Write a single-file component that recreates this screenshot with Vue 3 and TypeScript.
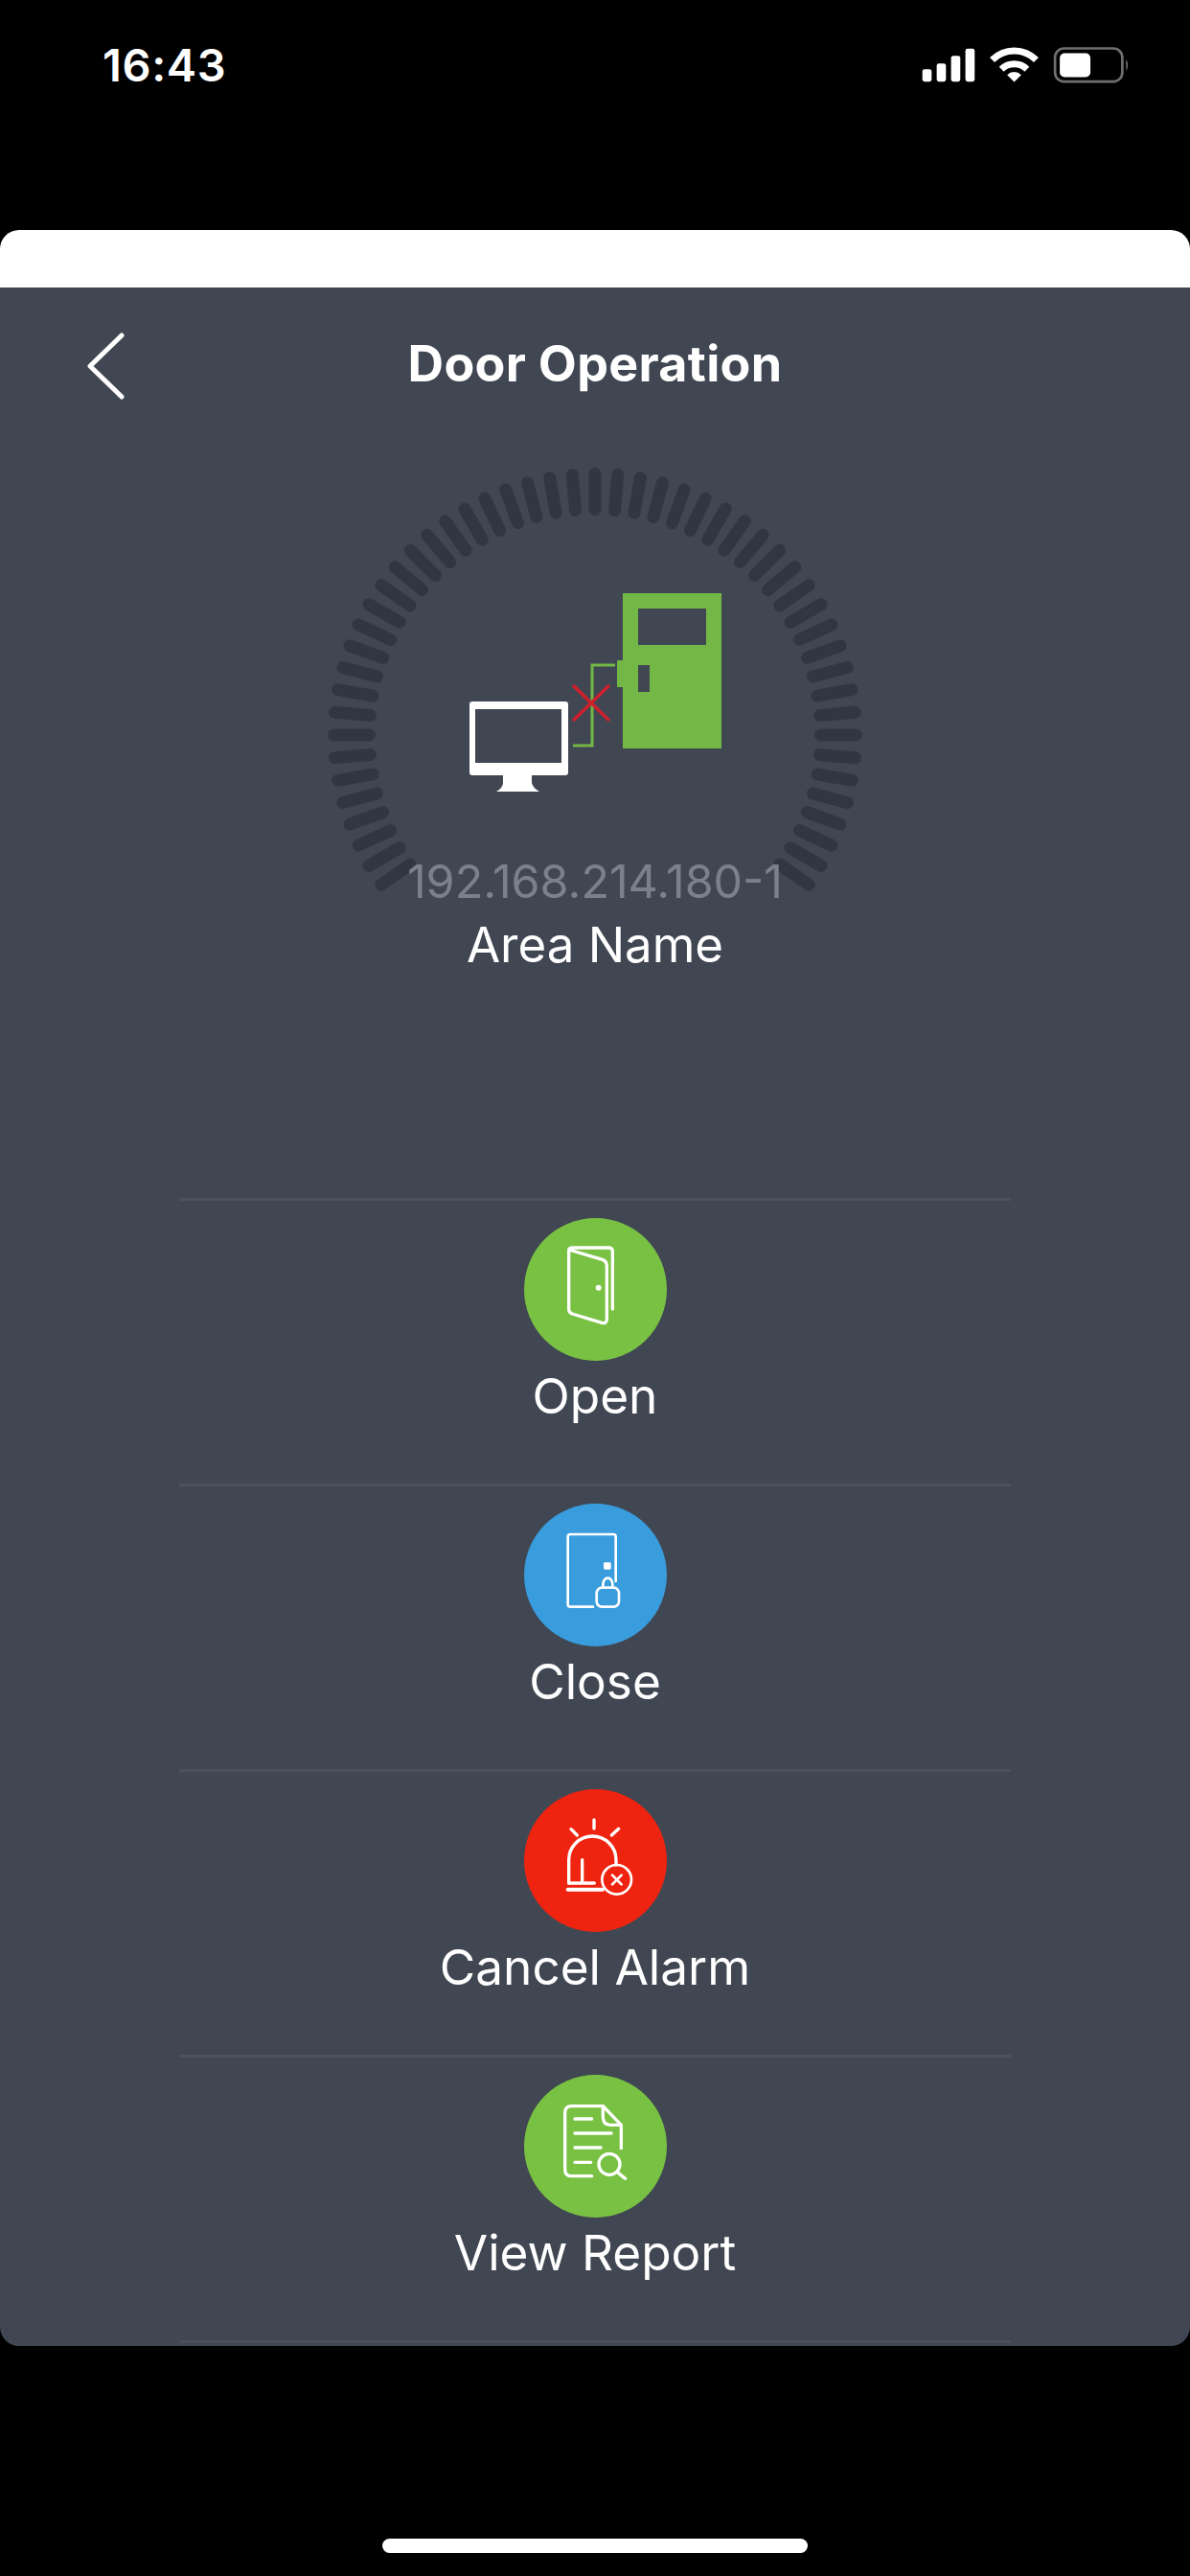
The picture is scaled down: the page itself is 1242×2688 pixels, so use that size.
<template>
  <div class="screen">
    <header class="status-bar">
      <span class="time">16:43</span>
      <svg class="status-icons" viewBox="170 80 670 125" width="223" height="42">
        <rect v-for="bar in signalBars" :key="bar.x" :x="bar.x" :y="bar.y" width="29" :height="194 - bar.y" rx="7" fill="#fff" />
        <path d="M400 126A97 97 0 0 1 538 126" fill="none" stroke="#fff" stroke-width="21" />
        <path d="M429 155A57 57 0 0 1 509 155" fill="none" stroke="#fff" stroke-width="21" />
        <path d="M469 195L447 173A31 31 0 0 1 491 173Z" fill="#fff" />
        <rect x="597" y="90" width="211" height="104" rx="28" fill="none" stroke="#6f6f6f" stroke-width="8" />
        <rect x="612" y="105" width="96" height="75" rx="15" fill="#fff" />
        <path d="M820 124Q831 142 820 161Z" fill="#6f6f6f" />
      </svg>
    </header>

    <div class="sheet">
      <div class="sheet-top"></div>
      <main class="panel">
        <div class="nav">
          <svg class="back" viewBox="0 0 40 70" width="40" height="70">
            <path d="M37 3L4 35L37 67" fill="none" stroke="#fff" stroke-width="5" stroke-linecap="round" stroke-linejoin="round" />
          </svg>
          <h1 class="title">Door Operation</h1>
        </div>

        <section class="device">
          <svg class="gauge" viewBox="341 487 560 560" width="560" height="560">
            <line
              v-for="tick in ticks"
              :key="tick.angle"
              :x1="tick.x1"
              :y1="tick.y1"
              :x2="tick.x2"
              :y2="tick.y2"
              stroke="#303743"
              stroke-width="13"
              stroke-linecap="round"
            />
            <!-- link between the monitor and the door -->
            <path d="M642 694H618V778H598" fill="none" stroke="#73b846" stroke-width="3" />
            <path d="M598 715L636 752M636 715L598 752" fill="none" stroke="#cf1f2d" stroke-width="3.5" />
            <path
              fill-rule="evenodd"
              fill="#73b846"
              d="M650 619H753V781H650ZM666 635V673H737V635ZM666 694V722H678V694Z"
            />
            <rect x="644" y="689" width="7" height="28" rx="1" fill="#73b846" />
            <path
              fill-rule="evenodd"
              fill="#fff"
              d="M493 732H590Q593 732 593 735V806Q593 809 590 809H493Q490 809 490 806V735Q490 732 493 732ZM496 740V796H586V740Z"
            />
            <path d="M525 808H555V817Q556 822 563 826H518Q525 822 525 817Z" fill="#fff" />
          </svg>
          <div class="labels">
            <div class="ip">192.168.214.180-1</div>
            <div class="area">Area Name</div>
          </div>
        </section>

        <nav class="actions">
          <button class="action">
            <span class="circle green">
              <svg viewBox="138 93 447 447" width="149" height="149" fill="none" stroke="#fff" stroke-width="10" stroke-linecap="round" stroke-linejoin="round">
                <path d="M278 192L383 223Q397 228 397 243V408Q397 425 382 421L289 393Q278 389 278 378V196Q278 186 290 186H402Q415 186 415 198V378" />
                <circle cx="371" cy="311" r="9" fill="#fff" stroke="none" />
              </svg>
            </span>
            <span class="label">Open</span>
          </button>

          <button class="action">
            <span class="circle blue">
              <svg viewBox="138 87 447 447" width="149" height="149" fill="none" stroke="#fff" stroke-width="8" stroke-linecap="round" stroke-linejoin="round">
                <path d="M354 410H283Q275 410 275 402V191Q275 183 283 183H417Q425 183 425 191V330" />
                <rect x="365" y="350" width="70" height="60" rx="17" />
                <path d="M385 350V340A15 20 0 0 1 415 340V350" />
                <rect x="387" y="271" width="23" height="22" rx="4" fill="#fff" stroke="none" />
              </svg>
            </span>
            <span class="label">Close</span>
          </button>

          <button class="action">
            <span class="circle red">
              <svg viewBox="138 81 447 447" width="149" height="149" fill="none" stroke="#fff" stroke-width="10" stroke-linecap="round" stroke-linejoin="round">
                <path d="M278 375V302A74 74 0 0 1 426 302V318" />
                <path d="M278 375H358M320 375V302" />
                <path d="M275 395H384" stroke-width="12" />
                <path d="M357 177V204M285 206L304 225M434 205L412 225" />
                <circle cx="428" cy="364" r="46" stroke-width="8" />
                <path d="M414 350L443 379M443 350L414 379" stroke-width="8" />
              </svg>
            </span>
            <span class="label">Cancel Alarm</span>
          </button>

          <button class="action">
            <span class="circle green">
              <svg viewBox="138 75 447 447" width="149" height="149" fill="none" stroke="#fff" stroke-width="10" stroke-linecap="round" stroke-linejoin="round">
                <path d="M350 392H287Q266 392 266 371V194Q266 173 287 173H385L442 232V305" />
                <path d="M385 173V208Q385 232 409 232H442" />
                <path d="M297 213H350M297 258H411M297 303H378M297 349H347" />
                <circle cx="405" cy="355" r="33" />
                <path d="M430 380L455 400" />
              </svg>
            </span>
            <span class="label">View Report</span>
          </button>
        </nav>
      </main>
    </div>

    <div class="home-area">
      <div class="home-bar"></div>
    </div>
  </div>
</template>

<script setup lang="ts">
const signalBars = [
  { x: 181, y: 155 },
  { x: 226, y: 137 },
  { x: 271, y: 113 },
  { x: 316, y: 91 },
]

const cx = 621
const cy = 767

// one tick every 5 degrees, clockwise from the top, with a gap at the bottom
const ticks = Array.from({ length: 72 }, (_, i) => i * 5)
  .filter((angle) => angle <= 125 || angle >= 235)
  .map((angle) => {
    const rad = (angle * Math.PI) / 180
    return {
      angle,
      x1: cx + 235.5 * Math.sin(rad),
      y1: cy - 235.5 * Math.cos(rad),
      x2: cx + 272.5 * Math.sin(rad),
      y2: cy - 272.5 * Math.cos(rad),
    }
  })
</script>

<style>
html,
body {
  margin: 0;
  background: #000;
}
</style>

<style scoped>
.screen {
  width: 1242px;
  height: 2688px;
  display: flex;
  flex-direction: column;
  background: #000;
  color: #fff;
  font-family: Inter, "Liberation Sans", sans-serif;
  overflow: hidden;
}

.status-bar {
  height: 240px;
  flex: none;
  box-sizing: border-box;
  padding: 40px 60px 0 107px;
  display: flex;
  justify-content: space-between;
  align-items: flex-start;
}

.time {
  font-size: 47px;
  font-weight: 600;
  line-height: 56px;
  letter-spacing: 0.6px;
}

.status-icons {
  margin-top: 7px;
}

.sheet-top {
  height: 60px;
  background: #fff;
  border-radius: 20px 20px 0 0;
}

.panel {
  height: 2148px;
  background: #414752;
  border-radius: 0 0 20px 20px;
}

.nav {
  height: 187px;
  box-sizing: border-box;
  padding-top: 46px;
  display: grid;
  grid-template-columns: 1fr auto 1fr;
  align-items: start;
}

.back {
  margin-left: 90px;
  margin-top: 1px;
}

.title {
  margin: 0;
  font-size: 52px;
  font-weight: 700;
  line-height: 62px;
  padding-top: 3px;
  letter-spacing: 0.3px;
}

.device {
  height: 763px;
  display: flex;
  flex-direction: column;
  align-items: center;
}

.gauge {
  flex: none;
}

.labels {
  margin-top: -155px;
  text-align: center;
}

.ip {
  font-size: 48.4px;
  line-height: 56px;
  color: #7a808d;
}

.area {
  margin-top: 8px;
  font-size: 51px;
  line-height: 60px;
}

.actions {
  width: 868px;
  margin: 0 auto;
  border-bottom: 3px solid #4a505b;
}

.action {
  width: 100%;
  height: 298px;
  box-sizing: border-box;
  border: 0;
  border-top: 3px solid #4c525d;
  background: none;
  padding: 18px 0 0;
  color: inherit;
  font: inherit;
  display: flex;
  flex-direction: column;
  align-items: center;
}

.circle {
  width: 149px;
  height: 149px;
  border-radius: 50%;
  display: block;
}

.circle svg {
  display: block;
}

.green {
  background: #79c143;
}

.blue {
  background: #389cdd;
}

.red {
  background: #ee2410;
}

.label {
  margin-top: 6px;
  font-size: 51.3px;
  line-height: 60px;
}

.home-area {
  flex: 1;
  display: flex;
  justify-content: center;
  padding-top: 201px;
}

.home-bar {
  width: 444px;
  height: 15px;
  border-radius: 8px;
  background: #fff;
}
</style>
